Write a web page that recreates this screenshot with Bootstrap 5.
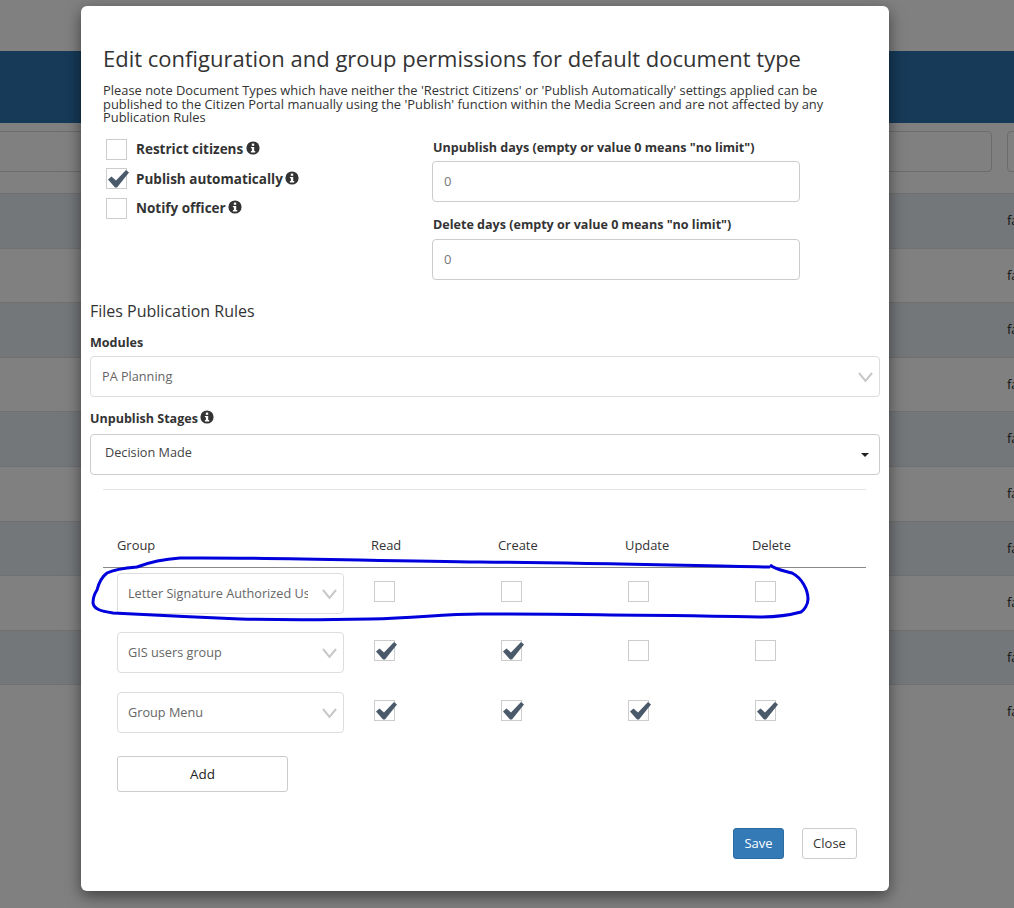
<!doctype html>
<html lang="en"><head><meta charset="utf-8">
<title>Edit configuration</title>
<link rel="stylesheet" href="https://cdn.jsdelivr.net/npm/bootstrap@5.3.0/dist/css/bootstrap.min.css">
<style>
html,body{height:100%}
body{background:#808080;font-family:"Open Sans","Noto Sans",sans-serif;color:#333;font-size:13px;overflow:hidden;position:relative}
.page-spacer{height:51px}
.page-band{height:72px;background:#163a58}
.page-filter{height:70px;padding:8px 0;gap:15px}
.filter-main{flex:1;height:41px;border:1px solid #6c6c6c;border-radius:4px;margin-left:-10px}
.filter-side{width:30px;height:41px;border:1px solid #6c6c6c;border-radius:4px;margin-right:-23px}
.page-row{height:54.6px;border-top:1px solid #707070;color:#111;padding-left:1007px;line-height:52px;white-space:nowrap;overflow:hidden}
.page-row:nth-child(odd){background:#74777a}
.dlg{position:absolute;left:81px;top:6px;width:808px;height:885px;background:#fff;border:0;border-radius:6px;box-shadow:0 5px 15px rgba(0,0,0,.5);padding:0 9px}
.dlg-title{font-size:22px;font-weight:400;line-height:30px;margin:37px 0 0 13px;color:#333}
.dlg-note{font-size:12.9px;line-height:13.5px;margin:11px 0 0 13px;color:#333;width:740px}
.perm-row{margin:8px 0 0 16px}
.perm-left{width:326px;padding-top:2px}
.perm-right{width:368px;padding-top:6px}
.chk-line{height:29.5px;font-size:13.5px;font-weight:700;color:#333;gap:9px}
.tick-box{width:21px;height:21px;border:1px solid #ccc;display:inline-block;position:relative;flex:none;background:#fff}
.tick-box svg{position:absolute;left:0;top:0;width:22px;height:20px}
.info-i{width:14px;height:14px;vertical-align:-1px;margin-left:-1px}
.fld-label{font-size:12.55px;font-weight:700;line-height:18px;color:#333;margin:0 0 4px 1px;display:block}
.fld-label-next{margin-bottom:5px}
.fld-input{height:41px;border:1px solid #ccc;border-radius:4px;padding:0 11px;line-height:38px;color:#777;font-size:13px;margin-bottom:14px}
.sec-title{font-size:16px;line-height:22px;font-weight:400;margin:6px 0 0;color:#333}
.sec-label{font-size:12.55px;font-weight:700;color:#333;line-height:18px;margin:12px 0 4px}
.sec-label-gap{margin:13px 0 6px}
.sel-box{height:41px;border:1px solid #ddd;border-radius:4px;padding:0 11px;line-height:38px;color:#666;font-size:12.7px;position:relative;background:#fff;white-space:nowrap;overflow:hidden}
.sel-box svg{position:absolute;right:6px;top:14px;width:15px;height:12px}
.sel-box .sel-text{display:block;overflow:hidden;width:180px}
.sel-wide{border-color:#ccc;color:#444;padding-left:14px;line-height:35px}
.caret-dn{position:absolute;right:10px;top:18px;width:0;height:0;border-left:4px solid transparent;border-right:4px solid transparent;border-top:4px solid #222}
.rule-line{margin:14px 0 0 13px;width:763px;border-top:1px solid #e5e5e5}
.perm-tbl{width:763px;margin:46px 0 0 13px;table-layout:fixed;border-collapse:collapse}
.perm-tbl th{font-weight:400;font-size:12.9px;line-height:18px;padding:0 0 13px;color:#333;border-bottom:1px solid #888;width:127px}
.perm-tbl th:first-child{padding-left:14px;width:268px}
.perm-tbl th:last-child{width:114px}
.perm-tbl td{height:60px;padding:5px 0 0;vertical-align:top}
.perm-tbl td:first-child{padding-left:14px}
.perm-tbl td .tick-box{display:block;margin:8px 0 0 3px}
.perm-tbl .sel-box{width:227px;padding-left:10px}
.add-btn{width:171px;height:36px;border:1px solid #ccc;border-radius:3px;background:#fff;color:#222;font-size:13.5px;font-weight:500;margin:9px 0 0 27px;padding:0}
.dlg-foot{position:absolute;right:32px;bottom:32px;gap:18px}
.foot-save,.foot-close{height:31px;font-size:13px;border-radius:3px;padding:0;line-height:29px}
.foot-save{width:51px;background:#337ab7;border:1px solid #2e6da4;color:#fff}
.foot-close{width:55px;background:#fff;border:1px solid #ccc;color:#333}
.scribble{position:absolute;left:0;top:0;width:1014px;height:908px;pointer-events:none}
</style></head>
<body>
<svg width="0" height="0" style="position:absolute"><defs>
<symbol id="ck" viewBox="0 0 22 20"><path d="M1 10.5 L4.5 7.5 L9 11.5 L19 1 L22 3.5 L10 18.5 L8 18.5 Z" fill="#4b5a6b"/></symbol>
<symbol id="ii" viewBox="0 0 14 14"><circle cx="7" cy="7" r="6.6" fill="#333"/><rect x="5.8" y="2.6" width="2.4" height="2.2" fill="#fff"/><path d="M4.9 6h3.3v4h1v1.4H4.9V10h1V7.3h-1z" fill="#fff"/></symbol>
<symbol id="cv" viewBox="0 0 15 12"><path d="M1 2 L7.5 10 L14 2" fill="none" stroke="#c8c8c8" stroke-width="2"/></symbol>
</defs></svg>

<div class="page-spacer"></div>
<div class="page-band"></div>
<div class="page-filter d-flex"><div class="filter-main"></div><div class="filter-side"></div></div>
<div>
<div class="page-row">fa</div><div class="page-row">fa</div><div class="page-row">fa</div><div class="page-row">fa</div><div class="page-row">fa</div><div class="page-row">fa</div><div class="page-row">fa</div><div class="page-row">fa</div><div class="page-row">fa</div><div class="page-row">fa</div>
</div>

<div class="dlg modal-content">
<h4 class="dlg-title">Edit configuration and group permissions for default document type</h4>
<p class="dlg-note">Please note Document Types which have neither the 'Restrict Citizens' or 'Publish Automatically' settings applied can be published to the Citizen Portal manually using the 'Publish' function within the Media Screen and are not affected by any Publication Rules</p>
<div class="perm-row d-flex">
<div class="perm-left">
<div class="chk-line d-flex align-items-center"><span class="tick-box"></span><span>Restrict citizens <svg class="info-i"><use href="#ii"/></svg></span></div>
<div class="chk-line d-flex align-items-center"><span class="tick-box"><svg><use href="#ck"/></svg></span><span>Publish automatically <svg class="info-i"><use href="#ii"/></svg></span></div>
<div class="chk-line d-flex align-items-center"><span class="tick-box"></span><span>Notify officer <svg class="info-i"><use href="#ii"/></svg></span></div>
</div>
<div class="perm-right">
<label class="fld-label">Unpublish days (empty or value 0 means "no limit")</label>
<div class="fld-input">0</div>
<label class="fld-label fld-label-next">Delete days (empty or value 0 means "no limit")</label>
<div class="fld-input">0</div>
</div>
</div>
<h5 class="sec-title">Files Publication Rules</h5>
<div class="sec-label">Modules</div>
<div class="sel-box">PA Planning<svg><use href="#cv"/></svg></div>
<div class="sec-label sec-label-gap">Unpublish Stages <svg class="info-i"><use href="#ii"/></svg></div>
<div class="sel-box sel-wide">Decision Made<span class="caret-dn"></span></div>
<div class="rule-line"></div>
<table class="perm-tbl">
<thead><tr><th>Group</th><th>Read</th><th>Create</th><th>Update</th><th>Delete</th></tr></thead>
<tbody>
<tr><td><div class="sel-box"><span class="sel-text">Letter Signature Authorized Users</span><svg><use href="#cv"/></svg></div></td><td><span class="tick-box"></span></td><td><span class="tick-box"></span></td><td><span class="tick-box"></span></td><td><span class="tick-box"></span></td></tr>
<tr><td><div class="sel-box"><span class="sel-text">GIS users group</span><svg><use href="#cv"/></svg></div></td><td><span class="tick-box"><svg><use href="#ck"/></svg></span></td><td><span class="tick-box"><svg><use href="#ck"/></svg></span></td><td><span class="tick-box"></span></td><td><span class="tick-box"></span></td></tr>
<tr><td><div class="sel-box"><span class="sel-text">Group Menu</span><svg><use href="#cv"/></svg></div></td><td><span class="tick-box"><svg><use href="#ck"/></svg></span></td><td><span class="tick-box"><svg><use href="#ck"/></svg></span></td><td><span class="tick-box"><svg><use href="#ck"/></svg></span></td><td><span class="tick-box"><svg><use href="#ck"/></svg></span></td></tr>
</tbody></table>
<button class="btn add-btn" type="button">Add</button>
<div class="dlg-foot d-flex"><button class="btn foot-save" type="button">Save</button><button class="btn foot-close" type="button">Close</button></div>
</div>

<svg class="scribble" viewBox="0 0 1014 908"><path d="M770 565 C776 570 786 571 792 573 C802 578 808 590 808 599 C808 605 804 610 801 612 C790 615 775 617 760 617 C710 616 660 615 610 615 C560 614 520 614 480 614 C440 614 420 618 370 619 C320 620 280 620 240 619 C200 617 150 615 113 613 C100 611 94 609 93 603 C93 597 95 593 97 590 C99 582 103 576 107 573 C115 569 125 568 137 567 C150 562 165 559 180 558 C260 557 380 561 480 562 C600 563 700 566 770 567" fill="none" stroke="#0000dc" stroke-width="3"/></svg>
<script src="https://cdn.jsdelivr.net/npm/bootstrap@5.3.0/dist/js/bootstrap.bundle.min.js"></script>
</body></html>
